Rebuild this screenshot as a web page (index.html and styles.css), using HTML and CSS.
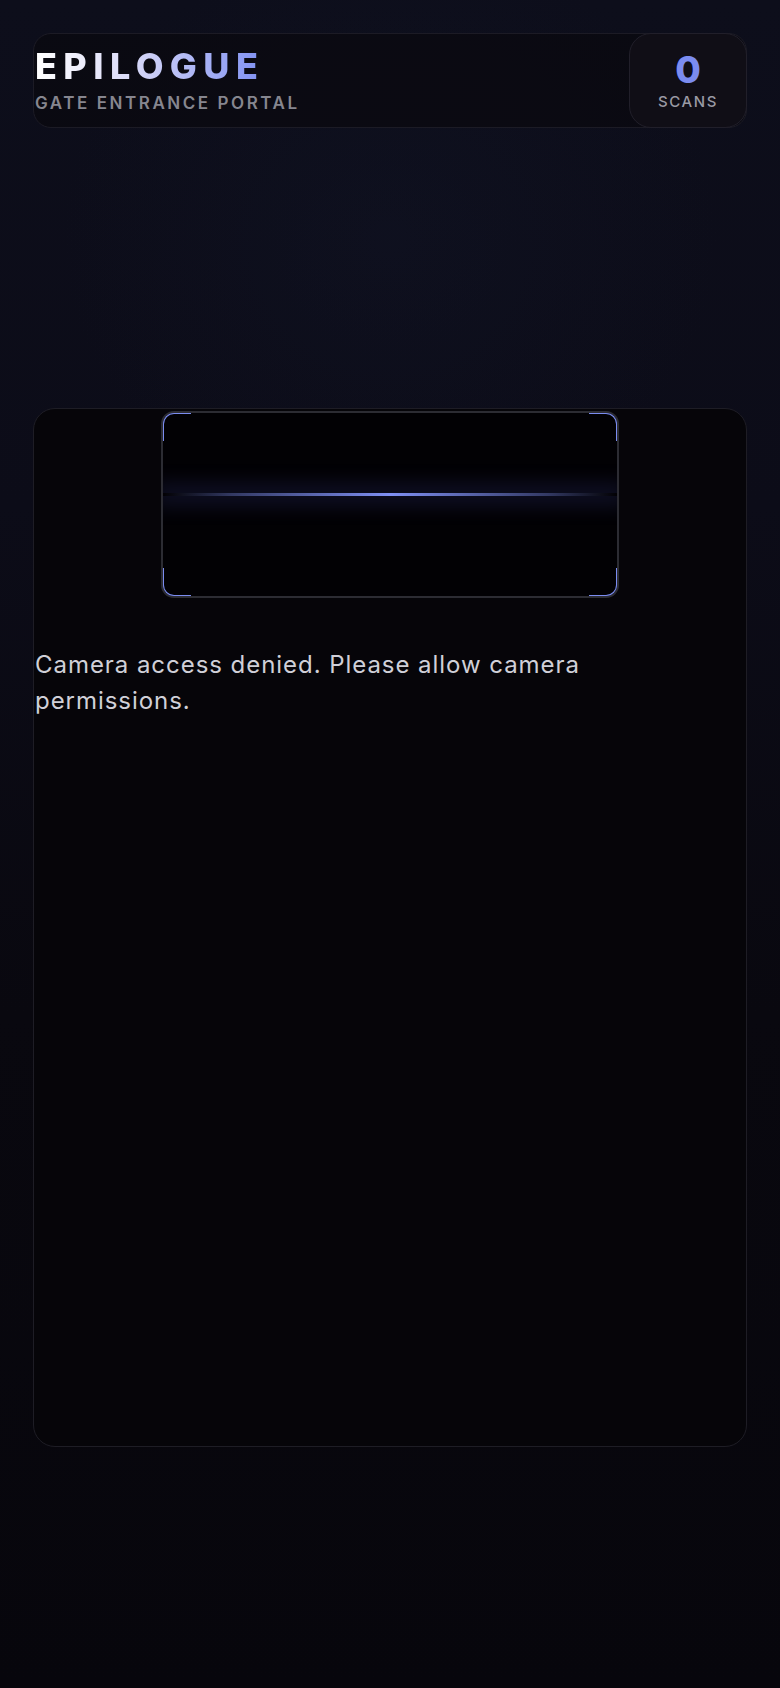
FILE: index.html
```html
<!DOCTYPE html>
<html lang="en">
<head>
<meta charset="utf-8">
<title>Epilogue Gate</title>
<link rel="stylesheet" href="styles.css">
</head>
<body>
<div class="page">
  <header class="header">
    <div class="brand">
      <h1 class="title">EPILOGUE</h1>
      <div class="subtitle">GATE ENTRANCE PORTAL</div>
    </div>
    <div class="counter">
      <div class="count">0</div>
      <div class="count-label">SCANS</div>
    </div>
  </header>

  <main class="card">
    <div class="scanner">
      <span class="corner tl"></span>
      <span class="corner tr"></span>
      <span class="corner bl"></span>
      <span class="corner br"></span>
      <div class="scanline"></div>
    </div>
    <p class="message">Camera access denied. Please allow camera permissions.</p>
  </main>
</div>
</body>
</html>
```

FILE: styles.css
```css
html, body {
  margin: 0;
  padding: 0;
}
body {
  min-height: 1688px;
  background:
    radial-gradient(ellipse 60% 25% at 50% 14%, rgba(18, 22, 40, 0.35), rgba(18, 22, 40, 0) 70%),
    linear-gradient(180deg, #0d0e1b 0%, #0c0c18 30%, #09080f 60%, #07060c 100%);
  font-family: Inter, "Noto Sans", "Liberation Sans", sans-serif;
  color: #d2d2da;
}
.page {
  padding: 33px 33px 0 33px;
  display: flex;
  flex-direction: column;
}
.header {
  height: 95px;
  box-sizing: border-box;
  border: 1px solid #1c1b25;
  border-radius: 18px;
  background: rgba(10, 9, 16, 0.85);
  display: flex;
  align-items: stretch;
  justify-content: space-between;
}
.brand {
  padding-left: 1px;
  display: flex;
  flex-direction: column;
  justify-content: center;
}
.title {
  margin: 0;
  font-family: Inter, sans-serif;
  font-weight: 800;
  font-size: 36px;
  line-height: 36px;
  letter-spacing: 6.4px;
  background: linear-gradient(90deg, #ffffff 0%, #dcdcf8 40%, #7f90f2 100%);
  -webkit-background-clip: text;
  background-clip: text;
  color: transparent;
  width: max-content;
}
.subtitle {
  margin-top: 9px;
  font-weight: 600;
  font-size: 17px;
  line-height: 20px;
  letter-spacing: 2.55px;
  color: #86868f;
}
.counter {
  width: 118px;
  margin: -1px -1px -1px 0;
  box-sizing: border-box;
  border: 1px solid #211f2a;
  border-radius: 22px;
  background: #100e16;
  display: flex;
  flex-direction: column;
  align-items: center;
  justify-content: center;
}
.count {
  font-weight: 800;
  font-size: 37px;
  line-height: 38px;
  color: #7b8cf0;
}
.count-label {
  margin-top: 4px;
  font-weight: 500;
  font-size: 15px;
  line-height: 18px;
  letter-spacing: 1.6px;
  color: #9a9aa4;
}
.card {
  margin-top: 280px;
  height: 1039px;
  box-sizing: border-box;
  border: 1.5px solid #1e1d25;
  border-radius: 22px;
  background: #060509;
  display: flex;
  flex-direction: column;
  align-items: stretch;
}
.scanner {
  position: relative;
  align-self: center;
  margin-top: 2px;
  width: 458px;
  height: 187px;
  box-sizing: border-box;
  border: 2px solid #2c2c33;
  border-radius: 13px;
  background: #020104;
  overflow: hidden;
}
.corner {
  position: absolute;
  width: 30px;
  height: 30px;
  box-sizing: border-box;
  border: 0 solid #7b8cf0;
}
.corner.tl { top: -2px; left: -2px; border-top-width: 3px; border-left-width: 3px; border-top-left-radius: 13px; }
.corner.tr { top: -2px; right: -2px; border-top-width: 3px; border-right-width: 3px; border-top-right-radius: 13px; }
.corner.bl { bottom: -2px; left: -2px; border-bottom-width: 3px; border-left-width: 3px; border-bottom-left-radius: 13px; }
.corner.br { bottom: -2px; right: -2px; border-bottom-width: 3px; border-right-width: 3px; border-bottom-right-radius: 13px; }
.scanline {
  position: absolute;
  left: 0;
  right: 0;
  top: 80px;
  height: 3px;
  background: linear-gradient(90deg, rgba(123, 140, 240, 0) 0%, rgba(123, 140, 240, 0.4) 15%, #7f90f4 50%, rgba(123, 140, 240, 0.4) 85%, rgba(123, 140, 240, 0) 100%);
  box-shadow: 0 0 20px 10px rgba(70, 80, 170, 0.2);
}
.message {
  margin: 49px 0 0 1px;
  max-width: 600px;
  font-size: 24px;
  line-height: 36px;
  letter-spacing: 0.95px;
  color: #d0d0d8;
}
```
